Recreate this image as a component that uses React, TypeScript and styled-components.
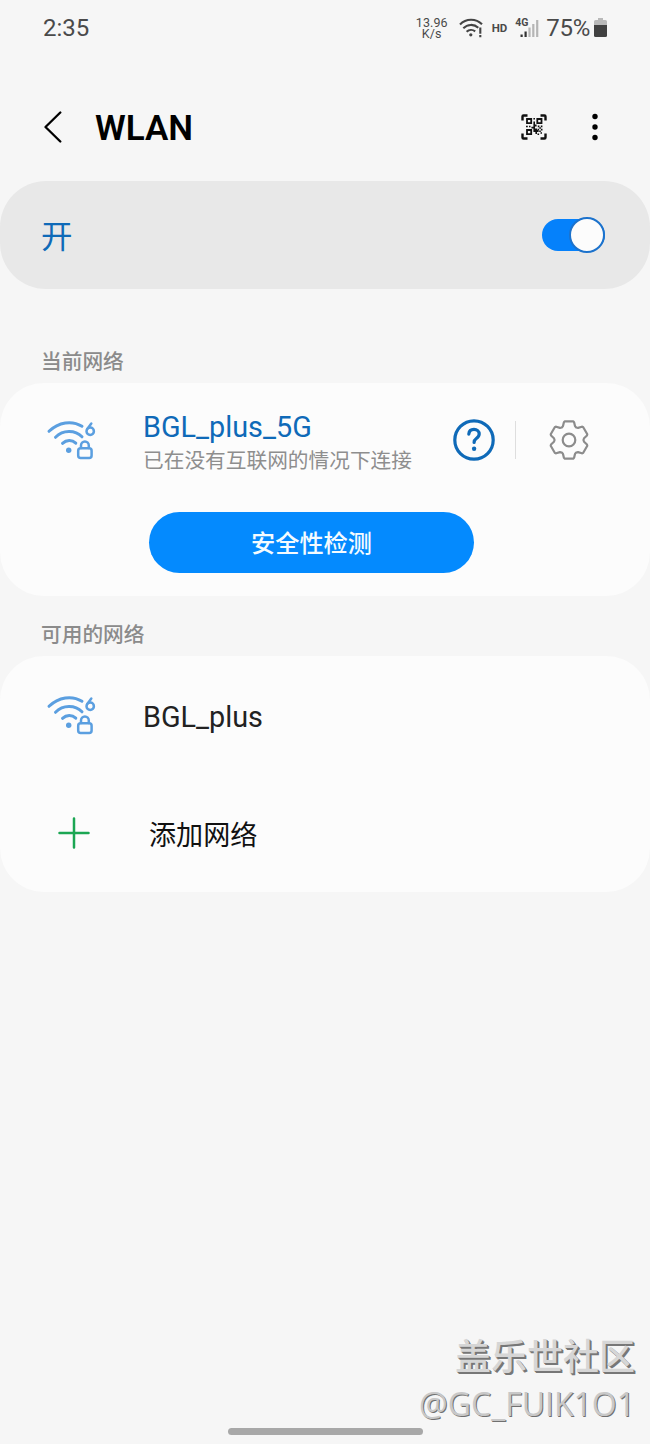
import React from "react";
import styled, { createGlobalStyle } from "styled-components";

const GlobalStyle = createGlobalStyle`
  * { box-sizing: border-box; }
  body {
    margin: 0;
    background: #f6f6f6;
    font-family: Roboto, "Noto Sans CJK SC", sans-serif;
  }
`;

const Screen = styled.main`
  display: flex;
  flex-direction: column;
  width: 650px;
  height: 1444px;
  overflow: hidden;
  background: #f6f6f6;
`;

const StatusBar = styled.div`
  display: flex;
  align-items: center;
  height: 55px;
  padding: 0 43px;
  color: #4a4a4a;
`;

const Clock = styled.span`
  flex: 1;
  font-size: 24px;
  line-height: 30px;
`;

const NetSpeed = styled.div`
  width: 34px;
  margin-right: 10px;
  font-size: 12.5px;
  line-height: 11px;
  text-align: center;
  letter-spacing: 0.1px;
  padding-top: 1px;
`;

const HdLabel = styled.span`
  margin: 0 8px 0 9px;
  font-size: 11.5px;
  font-weight: 700;
`;

const Cellular = styled.div`
  display: flex;
  align-items: flex-start;
  height: 20px;
  width: 31px;
`;

const CellLabel = styled.span`
  width: 5px;
  font-size: 10.5px;
  line-height: 10px;
  font-weight: 700;
`;

const Battery = styled.span`
  margin-right: 4px;
  font-size: 24px;
  line-height: 30px;
  letter-spacing: -0.3px;
`;

const Header = styled.header`
  display: flex;
  align-items: center;
  height: 126px;
  padding: 19px 52px 0 43px;
`;

const Title = styled.h1`
  flex: 1;
  margin: 2px 0 0 32px;
  color: #000;
  font-size: 35px;
  line-height: 42px;
  font-weight: 600;
`;

const HeaderIcon = styled.span<{ $gap?: number }>`
  display: flex;
  margin-top: -1px;
  margin-left: ${({ $gap = 0 }) => $gap}px;
`;

const SwitchPanel = styled.section`
  display: flex;
  align-items: center;
  justify-content: space-between;
  height: 108px;
  padding: 0 45px 0 41px;
  border-radius: 46px;
  background: #e8e8e8;
`;

const SwitchLabel = styled.span`
  padding-top: 6px;
  color: #0f6ab8;
  font-size: 31.5px;
  line-height: 46px;
`;

const Switch = styled.span`
  display: flex;
  align-items: center;
  justify-content: flex-end;
  width: 63px;
  height: 32px;
  margin-bottom: 1px;
  border-radius: 16px;
  background: #0581fb;
`;

const Knob = styled.span`
  flex: none;
  width: 36px;
  height: 36px;
  border: 2px solid #1c72cc;
  border-radius: 50%;
  background: #fcfcfc;
`;

const SectionTitle = styled.h2<{ $height: number; $bottom: number }>`
  display: flex;
  align-items: flex-end;
  height: ${({ $height }) => $height}px;
  margin: 0;
  padding: 0 41px ${({ $bottom }) => $bottom}px;
  color: #8b8b8b;
  font-size: 20.7px;
  line-height: 30px;
  font-weight: 500;
`;

const Card = styled.section<{ $height: number }>`
  height: ${({ $height }) => $height}px;
  border-radius: 44px;
  background: #fcfcfc;
`;

const Row = styled.div<{ $height: number }>`
  display: flex;
  align-items: center;
  height: ${({ $height }) => $height}px;
  padding: 0 61px 0 46px;
`;

const IconSlot = styled.span<{ $inset?: number }>`
  display: flex;
  width: 97px;
  padding-left: ${({ $inset = 0 }) => $inset}px;
`;

const NetworkText = styled.div`
  display: flex;
  flex: 1;
  flex-direction: column;
  padding-top: 6px;
  white-space: nowrap;
`;

const NetworkName = styled.span<{ $active?: boolean }>`
  padding-top: ${({ $active }) => ($active ? 0 : 3)}px;
  color: ${({ $active }) => ($active ? "#0f6ab8" : "#222")};
  font-size: 28.8px;
  line-height: 36px;
`;

const NetworkStatus = styled.span`
  color: #8e8e8e;
  font-size: 20.7px;
  line-height: 32px;
`;

const AddLabel = styled.span`
  margin-left: 6px;
  padding-top: 6px;
  color: #111;
  font-size: 27.1px;
  line-height: 40px;
`;

const Divider = styled.span`
  width: 1px;
  height: 38px;
  margin: 0 33px 0 20px;
  background: #dedede;
`;

const CheckButton = styled.button`
  display: block;
  width: 325px;
  height: 61px;
  margin: 15px 0 0 149px;
  padding: 3px 0 0;
  border: 0;
  border-radius: 31px;
  background: #048afe;
  color: #f4fbff;
  font: 500 24.2px/36px Roboto, "Noto Sans CJK SC", sans-serif;
`;

const Footer = styled.footer`
  display: flex;
  flex-direction: column;
  align-items: flex-end;
  margin-top: auto;
  padding-right: 15px;
  color: #d6d6d6;
  text-shadow: 1px 1px 0 #777, 2px 2px 0 #777;
`;

const Community = styled.span`
  font-size: 36px;
  line-height: 48px;
  font-weight: 500;
`;

const Author = styled.span`
  color: #c8c8c8;
  font-family: "Open Sans", sans-serif;
  font-size: 32px;
  line-height: 44px;
  text-shadow: 1px 1px 0 #707070;
`;

const HomeBar = styled.div`
  align-self: center;
  width: 195px;
  height: 7px;
  margin: 2px 0 9px;
  border-radius: 4px;
  background: #a8a8a8;
`;

const StatusWifi = () => (
  <svg width="24" height="20" viewBox="0 0 24 20" fill="none" stroke="#444" strokeWidth="2.1">
    <path d="M1 6.5C7 .2 17 .2 23 6.3M4.3 10.3C8.5 6 15 5.8 19.3 9.7M7.6 13.8c2.4-2.3 6-2.5 8.6-.4" />
    <circle cx="11.8" cy="16.8" r="1.6" fill="#444" stroke="none" />
    <path d="M21.3 9.5v6.2M21.3 17v2.3" />
  </svg>
);

const SignalBars = () => (
  <svg width="19" height="20" viewBox="0 0 19 20">
    <path d="M.5 16.5h2.2V19H.5zM4.5 13.500h2.200V19H4.500z" fill="#333" />
    <path d="M8.400 9.500h2.200V19H8.400zM12.200 6h2.200v13h-2.200zM16.100 2h2.200v17h-2.200z" fill="#b5b5b5" />
  </svg>
);

const BatteryIcon = () => (
  <svg width="13" height="19" viewBox="0 0 13 19">
    <path d="M4 0h5v2h2.5Q13 2 13 3.5V8H0V3.5Q0 2 1.5 2H4z" fill="#b9b9b9" />
    <path d="M0 7h13v10.5Q13 19 11.5 19h-10Q0 19 0 17.5z" fill="#414141" />
  </svg>
);

const BackIcon = () => (
  <svg width="20" height="32" viewBox="0 0 20 32" fill="none" stroke="#000" strokeWidth="2.3" strokeLinecap="round" strokeLinejoin="round">
    <path d="M17.3 1.5 2.5 16l14.8 14.5" />
  </svg>
);

const QrIcon = () => (
  <svg width="26" height="26" viewBox="0 0 26 26" fill="none" stroke="#111" strokeWidth="2.4">
    <path d="M1.5 6.500v-4q0-1 1-1h4M19.500 1.500h4q1 0 1 1v4M24.500 19.500v4q0 1-1 1h-4M6.500 24.500h-4q-1 0-1-1v-4" />
    <path strokeWidth="1.8" d="M6 5h4.200v4.200H6zM16.300 5h4.200v4.200h-4.200zM6 16h4.200v4.200H6z" />
    <path
      fill="#111"
      stroke="none"
      d="M12.400 4h1.600v1.600h-1.600zM12.400 7.600h1.600v2.800h1.600v2h-1.600v2h2v1.600h1.600v2h-1.600v2h-1.600v-2h-2v-3.600h-2v-1.600h2zM5 11.800h1.800v1.500H5zM8 11.800h1.500v1.500H8zM16.800 11.600h1.600v1.600h-1.600zM19.800 11.600h1.600v1.600h-1.600zM18.300 13.200h1.600v1.600h-1.600zM16.500 14.800h1.600v1.500h-1.600zM19.900 14.800h1.600v1.600h-1.600zM18.200 16.500h1.600v1.600h-1.600zM16.500 19.500h1.600v1.600h-1.600zM19.500 18.200h1.500v1.500h-1.500z"
    />
  </svg>
);

const MoreIcon = () => (
  <svg width="6" height="28" viewBox="0 0 6 28" fill="#000">
    <circle cx="3" cy="3.5" r="2.7" />
    <circle cx="3" cy="14" r="2.7" />
    <circle cx="3" cy="24.5" r="2.7" />
  </svg>
);

const SecureWifiIcon = () => (
  <svg width="50" height="42" viewBox="0 0 50 42" fill="none" stroke="#5b9fe0" strokeWidth="3" strokeLinecap="round" strokeLinejoin="round">
    <path d="M3 12.300C12.500 3 26 1 36 7.300M9.500 18.300C17 10.800 29 10.800 36 17.800M16.500 24.300c4-3.800 9.500-3.800 13.300-.2" />
    <circle cx="22.700" cy="31.200" r="2.700" fill="#5b9fe0" stroke="none" />
    <g strokeWidth="2.500">
      <rect x="32.200" y="29.200" width="13.400" height="9.800" rx="2.500" />
      <path d="M35 29v-2.500a3.900 3.900 0 0 1 7.800 0V29" />
      <path d="M45.300 4.600 41.300 10" />
      <circle cx="44.200" cy="12.300" r="3.700" />
    </g>
  </svg>
);

const HelpIcon = () => (
  <svg width="42" height="42" viewBox="0 0 42 42" fill="none" stroke="#0f6ab8" strokeWidth="3.2" strokeLinecap="round">
    <circle cx="21" cy="21" r="19.200" />
    <path d="M15.800 15.200c.2-3 2.300-4.900 5.200-4.900s5.200 1.900 5.200 4.700c0 2.400-1.400 3.400-2.900 4.500-1.400 1-2.200 1.900-2.200 3.900" />
    <circle cx="21.100" cy="29.800" r="2.200" fill="#0f6ab8" stroke="none" />
  </svg>
);

const gearPath =
  [0, 60, 120, 180, 240, 300]
    .flatMap((angle) => {
      const a = (angle * Math.PI) / 180;
      return [
        [-7.2, -12.5], [-6, -13.9], [-5.1, -17.8], [-4.2, -18.7], [4.2, -18.7], [5.1, -17.8], [6, -13.9], [7.2, -12.5],
      ].map(([x, y]) => {
        const px = x * Math.cos(a) - y * Math.sin(a);
        const py = x * Math.sin(a) + y * Math.cos(a);
        return `${px.toFixed(2)} ${py.toFixed(2)}`;
      });
    })
    .join("L");

const GearIcon = () => (
  <svg width="40" height="40" viewBox="-20 -20 40 40" fill="none" stroke="#8c8c8c" strokeWidth="2.2" strokeLinejoin="round">
    <path d={`M${gearPath}Z`} />
    <circle r="6.3" />
  </svg>
);

const PlusIcon = () => (
  <svg width="32" height="32" viewBox="0 0 32 32" stroke="#1ba653" strokeWidth="2.5" strokeLinecap="round">
    <path d="M16 1.5v29M1.5 16h29" />
  </svg>
);

export default function App() {
  return (
    <>
      <GlobalStyle />
      <Screen>
        <StatusBar>
          <Clock>2:35</Clock>
          <NetSpeed>13.96<br />K/s</NetSpeed>
          <StatusWifi />
          <HdLabel>HD</HdLabel>
          <Cellular>
            <CellLabel>4G</CellLabel>
            <SignalBars />
          </Cellular>
          <Battery>75%</Battery>
          <BatteryIcon />
        </StatusBar>
        <Header>
          <HeaderIcon><BackIcon /></HeaderIcon>
          <Title>WLAN</Title>
          <HeaderIcon><QrIcon /></HeaderIcon>
          <HeaderIcon $gap={45}><MoreIcon /></HeaderIcon>
        </Header>
        <SwitchPanel>
          <SwitchLabel>开</SwitchLabel>
          <Switch><Knob /></Switch>
        </SwitchPanel>
        <SectionTitle $height={94} $bottom={6}>当前网络</SectionTitle>
        <Card $height={213}>
          <Row $height={114}>
            <IconSlot><SecureWifiIcon /></IconSlot>
            <NetworkText>
              <NetworkName $active>BGL_plus_5G</NetworkName>
              <NetworkStatus>已在没有互联网的情况下连接</NetworkStatus>
            </NetworkText>
            <HelpIcon />
            <Divider />
            <GearIcon />
          </Row>
          <CheckButton>安全性检测</CheckButton>
        </Card>
        <SectionTitle $height={60} $bottom={6}>可用的网络</SectionTitle>
        <Card $height={236}>
          <Row $height={118}>
            <IconSlot><SecureWifiIcon /></IconSlot>
            <NetworkName>BGL_plus</NetworkName>
          </Row>
          <Row $height={118}>
            <IconSlot $inset={12}><PlusIcon /></IconSlot>
            <AddLabel>添加网络</AddLabel>
          </Row>
        </Card>
        <Footer>
          <Community>盖乐世社区</Community>
          <Author>@GC_FUIK1O1</Author>
        </Footer>
        <HomeBar />
      </Screen>
    </>
  );
}
